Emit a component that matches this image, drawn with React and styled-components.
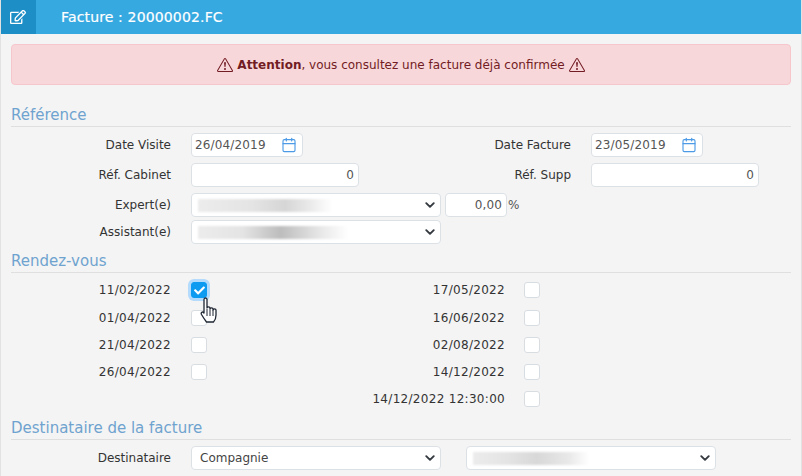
import React from 'react';
import styled, { createGlobalStyle } from 'styled-components';
import { FaRegEdit, FaCheck } from 'react-icons/fa';
import { BsExclamationTriangle } from 'react-icons/bs';
import { Calendar } from 'lucide-react';

const GlobalStyle = createGlobalStyle`
  html, body {
    margin: 0;
    padding: 0;
    background: #f4f4f4;
    font-family: "DejaVu Sans", "Liberation Sans", sans-serif;
  }
`;

const Page = styled.div`
  position: relative;
  width: 802px;
  height: 476px;
  overflow: hidden;
  box-sizing: border-box;
  border-left: 1px solid #e2e2e2;
  border-right: 1px solid #e2e2e2;
  background: #f4f4f4;
  color: #333;
  font-size: 12px;
`;

const Header = styled.header`
  display: flex;
  align-items: center;
  height: 34px;
  margin: 0 -1px;
  background: #36a9e1;
  color: #fff;
`;

const HeaderIcon = styled.div`
  display: flex;
  align-items: center;
  justify-content: center;
  width: 36px;
  height: 34px;
  background: #1e8ec6;
  font-size: 16px;
`;

const HeaderTitle = styled.h1`
  margin: 0 0 0 25px;
  font-size: 14px;
  font-weight: 400;
  letter-spacing: 0.15px;
  -webkit-text-stroke: 0.2px #fff;
`;

const Content = styled.div`
  padding: 10px 10px 0;
`;

const Alert = styled.div`
  display: flex;
  align-items: center;
  justify-content: center;
  gap: 4px;
  box-sizing: border-box;
  height: 41px;
  border: 1px solid #f5c6cb;
  border-radius: 4px;
  background: #f8d7da;
  color: #721c24;
  font-size: 12px;
  svg {
    font-size: 16px;
  }
`;

const Section = styled.section`
  margin-top: ${(props) => props.$top}px;
`;

const SectionTitle = styled.h2`
  margin: 0 0 ${(props) => props.$below || 6}px;
  height: 23px;
  border-bottom: 1px solid #dfdfdf;
  color: #6fa3cf;
  font-size: 15px;
  font-weight: 400;
  line-height: 25px;
  white-space: nowrap;
`;

const FormGrid = styled.div`
  display: grid;
  grid-template-columns: 400px 400px;
  row-gap: 6px;
  margin-top: ${(props) => props.$top || 0}px;
`;

const Field = styled.div`
  display: flex;
  align-items: center;
  gap: ${(props) => props.$gap || 20}px;
  min-width: 0;
`;

const Label = styled.label`
  width: 160px;
  flex: none;
  text-align: right;
  white-space: nowrap;
`;

const Box = styled.div`
  display: flex;
  flex: none;
  align-items: center;
  justify-content: space-between;
  box-sizing: border-box;
  width: ${(props) => props.$width}px;
  height: 24px;
  padding: 0 4px 0 3px;
  border: 1px solid #dce1e6;
  border-radius: 4px;
  background: #fff;
  color: #555;
  letter-spacing: 0.15px;
`;

const NumberBox = styled(Box)`
  justify-content: flex-end;
`;

const SelectBox = styled(Box)`
  padding: 0 5px 0 8px;
  color: #444;
  letter-spacing: 0;
`;

const CalendarIcon = styled(Calendar)`
  margin-right: 1px;
  color: #4d9be6;
`;

const Blur = styled.div`
  width: ${(props) => props.$width}px;
  height: 13px;
  margin-left: -2px;
  background: linear-gradient(
    90deg,
    #ececec 0%,
    #e4e4e4 ${(props) => props.$dark}%,
    ${(props) => props.$shade} ${(props) => props.$dark + 25}%,
    #e8e8e8 82%,
    #fff 100%
  );
  filter: blur(1px);
`;

const Chevron = () => (
  <svg width="10" height="10" viewBox="0 0 16 16" style={{ flex: 'none' }}>
    <path d="M2 5l6 6 6-6" fill="none" stroke="#343a40" strokeWidth="3" strokeLinecap="round" strokeLinejoin="round" />
  </svg>
);

const Select = ({ children }) => (
  <SelectBox $width={250}>
    {children}
    <Chevron />
  </SelectBox>
);

const DateInput = ({ value }) => (
  <Box $width={112}>
    {value}
    <CalendarIcon size={16} strokeWidth={1.7} />
  </Box>
);

const Percent = styled.span`
  color: #555;
`;

const Inline = styled.div`
  display: flex;
  align-items: center;
  gap: ${(props) => props.$gap}px;
`;

const DatesGrid = styled.div`
  display: grid;
  grid-template-columns: 334px 300px;
  grid-template-rows: 17px;
  grid-auto-rows: 16px;
  row-gap: 11px;
`;

const CheckRow = styled(Field)`
  align-items: flex-start;
  height: 16px;
`;

const Check = styled.div`
  display: flex;
  align-items: center;
  justify-content: center;
  box-sizing: border-box;
  width: 16px;
  height: 16px;
  border: 1px solid ${(props) => (props.$on ? '#0d9bf2' : '#d8dde2')};
  border-radius: 3px;
  background: ${(props) => (props.$on ? '#0d9bf2' : '#fff')};
  box-shadow: ${(props) => (props.$on ? '0 0 0 3px #b4dafc' : 'none')};
  color: #fff;
  font-size: 11px;
`;

const DateLabel = styled.span`
  width: 160px;
  flex: none;
  line-height: 16px;
  text-align: right;
  white-space: nowrap;
  color: #333;
  letter-spacing: 0.3px;
`;

const Cursor = styled.svg`
  position: absolute;
  left: 199px;
  top: 297px;
`;

const DateRow = ({ label, checked, gap = 20 }) => (
  <CheckRow $gap={gap}>
    <DateLabel>{label}</DateLabel>
    <Check $on={checked}>{checked && <FaCheck />}</Check>
  </CheckRow>
);

export default function App() {
  return (
    <>
      <GlobalStyle />
      <Page>
        <Header>
          <HeaderIcon>
            <FaRegEdit />
          </HeaderIcon>
          <HeaderTitle>Facture : 20000002.FC</HeaderTitle>
        </Header>
        <Content>
          <Alert>
            <BsExclamationTriangle />
            <span>
              <b>Attention</b>, vous consultez une facture déjà confirmée
            </span>
            <BsExclamationTriangle />
          </Alert>

          <Section $top={18}>
            <SectionTitle>Référence</SectionTitle>
            <FormGrid>
              <Field>
                <Label>Date Visite</Label>
                <DateInput value="26/04/2019" />
              </Field>
              <Field>
                <Label>Date Facture</Label>
                <DateInput value="23/05/2019" />
              </Field>
              <Field>
                <Label>Réf. Cabinet</Label>
                <NumberBox $width={168}>0</NumberBox>
              </Field>
              <Field>
                <Label>Réf. Supp</Label>
                <NumberBox $width={168}>0</NumberBox>
              </Field>
              <Field>
                <Label>Expert(e)</Label>
                <Inline $gap={4}>
                  <Select>
                    <Blur $width={134} $dark={40} $shade="#d6d6d6" />
                  </Select>
                  <Inline $gap={1}>
                    <NumberBox $width={62}>0,00</NumberBox>
                    <Percent>%</Percent>
                  </Inline>
                </Inline>
              </Field>
            </FormGrid>
            <FormGrid $top={3}>
              <Field>
                <Label>Assistant(e)</Label>
                <Select>
                  <Blur $width={150} $dark={30} $shade="#bdbdbd" />
                </Select>
              </Field>
            </FormGrid>
          </Section>

          <Section $top={5}>
            <SectionTitle $below={9}>Rendez-vous</SectionTitle>
            <DatesGrid>
              <DateRow label="11/02/2022" checked />
              <DateRow label="17/05/2022" gap={19} />
              <DateRow label="01/04/2022" />
              <DateRow label="16/06/2022" gap={19} />
              <DateRow label="21/04/2022" />
              <DateRow label="02/08/2022" gap={19} />
              <DateRow label="26/04/2022" />
              <DateRow label="14/12/2022" gap={19} />
              <div />
              <DateRow label="14/12/2022 12:30:00" gap={19} />
            </DatesGrid>
          </Section>

          <Section $top={9}>
            <SectionTitle>Destinataire de la facture</SectionTitle>
            <Field>
              <Label>Destinataire</Label>
              <Inline $gap={25}>
                <Select>Compagnie</Select>
                <Select>
                  <Blur $width={116} $dark={30} $shade="#d8d8d8" />
                </Select>
              </Inline>
            </Field>
          </Section>
        </Content>
        <Cursor width="20" height="28" viewBox="0 0 20 28">
          <path
            d="M4 2.500c0-2 3-2 3 0V11c0-1.600 3-1.600 3 0v1c0-1.600 3-1.600 3 0v1c0-1.500 3-1.500 3 0v5c0 3-1.500 6-2.500 7H6.500C5 23 3.500 21 1.500 17.500c-1-2 1-3.500 2.500-1.500V2.500z"
            fill="#fff"
            stroke="#1f2733"
            strokeWidth="1.300"
            strokeLinejoin="round"
          />
          <path d="M7 12v7M10 12.500V19M13 13v6" stroke="#1f2733" strokeWidth="1" fill="none" />
        </Cursor>
      </Page>
    </>
  );
}
